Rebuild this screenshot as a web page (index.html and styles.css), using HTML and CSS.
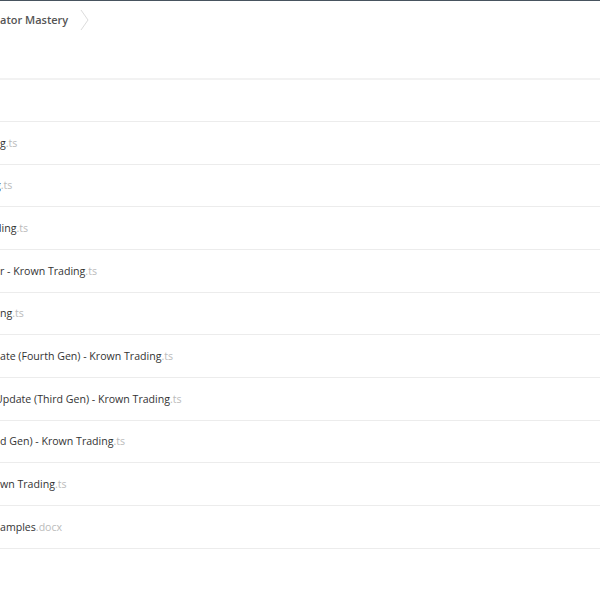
FILE: index.html
```html
<!DOCTYPE html>
<html lang="en">
<head>
    <meta charset="UTF-8">
    <title>Indicator Mastery</title>
    <link rel="stylesheet" href="styles.css">
</head>
<body>
<div class="browser">
    <div class="topbar">
        <span class="crumb">ator Mastery</span>
        <svg class="crumb__sep" width="9" height="22" viewBox="0 0 9 22">
            <polyline points="1,1 8,11 1,21" fill="none" stroke="#dcdcdc" stroke-width="1"/>
        </svg>
    </div>
    <div class="toolbar"></div>

    <div class="files">
        <div class="file file--head"></div>
        <div class="file"><span class="file__name">g</span><span class="file__ext">.ts</span></div>
        <div class="file"><span class="file__name cut">g</span><span class="file__ext">.ts</span></div>
        <div class="file"><span class="file__name cut">ding</span><span class="file__ext">.ts</span></div>
        <div class="file"><span class="file__name">r - Krown Trading</span><span class="file__ext">.ts</span></div>
        <div class="file"><span class="file__name">ng</span><span class="file__ext">.ts</span></div>
        <div class="file"><span class="file__name">ate (Fourth Gen) - Krown Trading</span><span class="file__ext">.ts</span></div>
        <div class="file"><span class="file__name cut">Update (Third Gen) - Krown Trading</span><span class="file__ext">.ts</span></div>
        <div class="file"><span class="file__name">d Gen) - Krown Trading</span><span class="file__ext">.ts</span></div>
        <div class="file"><span class="file__name">wn Trading</span><span class="file__ext">.ts</span></div>
        <div class="file"><span class="file__name">amples</span><span class="file__ext">.docx</span></div>
    </div>
</div>
</body>
</html>
```

FILE: styles.css
```css
body, html {
    margin: 0;
    background-color: #fff;
    font-family: "Open Sans", "Liberation Sans", sans-serif;
}

.browser {
    width: 600px;
    overflow: hidden;
}

.topbar {
    display: flex;
    align-items: center;
    height: 37px;
    border-top: 1px solid #48535f;
}

.crumb {
    font-size: 11px;
    font-weight: 600;
    color: #555;
}

.crumb__sep {
    margin-left: 12px;
}

.toolbar {
    height: 40px;
}

.files {
    border-top: 2px solid #f2f2f2;
}

.file {
    display: flex;
    align-items: center;
    height: 42.67px;
    box-sizing: border-box;
    border-bottom: 1px solid #ececec;
    font-size: 10.6px;
    white-space: nowrap;
}

.file--head {
    height: 42px;
}

.file__name {
    color: #333;
}

.file__name.cut {
    margin-left: -5px;
}

.file__ext {
    color: #bbb;
}
```
